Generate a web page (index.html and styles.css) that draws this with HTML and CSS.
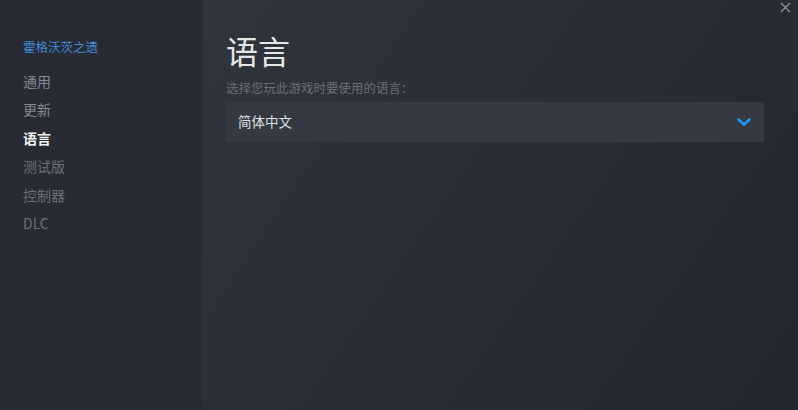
FILE: index.html
```html
<!DOCTYPE html>
<html lang="zh">
<head>
<meta charset="utf-8">
<title>属性</title>
<link rel="stylesheet" href="styles.css">
</head>
<body>
<div class="window">
  <nav class="sidebar">
    <div class="game-title">霍格沃茨之遗</div>
    <ul class="nav">
      <li class="nav-item">通用</li>
      <li class="nav-item">更新</li>
      <li class="nav-item active">语言</li>
      <li class="nav-item dim">测试版</li>
      <li class="nav-item dim">控制器</li>
      <li class="nav-item dim">DLC</li>
    </ul>
  </nav>
  <main class="content">
    <h1 class="heading">语言</h1>
    <p class="subtitle">选择您玩此游戏时要使用的语言：</p>
    <div class="dropdown">
      <span class="dropdown-value">简体中文</span>
      <svg class="chevron" width="14" height="9" viewBox="0 0 14 9"><path d="M1.5 1.5 L7 6.5 L12.5 1.5" fill="none" stroke="#1a9fff" stroke-width="2.6" stroke-linecap="round" stroke-linejoin="round"/></svg>
    </div>
  </main>
  <button class="close" aria-label="关闭">
    <svg width="11" height="11" viewBox="0 0 11 11"><path d="M1 1 L10 10 M10 1 L1 10" stroke="#8d9096" stroke-width="1.4"/></svg>
  </button>
</div>
</body>
</html>
```
FILE: styles.css
```css
* { box-sizing: border-box; }
html, body { margin: 0; padding: 0; }
body {
  width: 798px;
  height: 410px;
  overflow: hidden;
  background: #262930;
  font-family: "Noto Sans CJK SC", "Noto Sans", sans-serif;
}
.window {
  position: relative;
  display: flex;
  width: 798px;
  height: 410px;
}
.sidebar {
  width: 203px;
  flex: none;
  background: #282b34;
  padding: 37px 0 0 23px;
  border-right: 1px solid #2a2d36;
}
.game-title {
  color: #3f8ad8;
  font-size: 12.5px;
  line-height: 20px;
  margin-bottom: 14px;
}
.nav {
  list-style: none;
  margin: 0;
  padding: 0;
}
.nav-item {
  color: #868a92;
  font-size: 14px;
  line-height: 20px;
  margin-bottom: 8.4px;
}
.nav-item.active {
  color: #f2f2f2;
  font-weight: 700;
}
.nav-item.dim {
  color: #6c7078;
}
.content {
  flex: 1;
  background: linear-gradient(125deg, #30343d 0%, #2a2e37 45%, #23262d 100%);
  padding: 29px 34px 0 23px;
}
.heading {
  margin: 0;
  color: #e6e7e9;
  font-size: 32px;
  font-weight: 400;
  line-height: 42px;
}
.subtitle {
  margin: 8px 0 0 0;
  color: #6a6f78;
  font-size: 12.5px;
  line-height: 18px;
}
.dropdown {
  margin-top: 5px;
  height: 40px;
  display: flex;
  align-items: center;
  justify-content: space-between;
  background: #353942;
  border-radius: 3px;
  padding: 0 13px 0 12px;
}
.dropdown-value {
  color: #dfe0e2;
  font-size: 13.5px;
  line-height: 20px;
  margin-bottom: 3px;
}
.chevron { display: block; margin-top: 1px; }
.close {
  position: absolute;
  top: 2px;
  right: 7px;
  width: 11px;
  height: 11px;
  padding: 0;
  border: 0;
  background: none;
}
.close svg { display: block; }
```
